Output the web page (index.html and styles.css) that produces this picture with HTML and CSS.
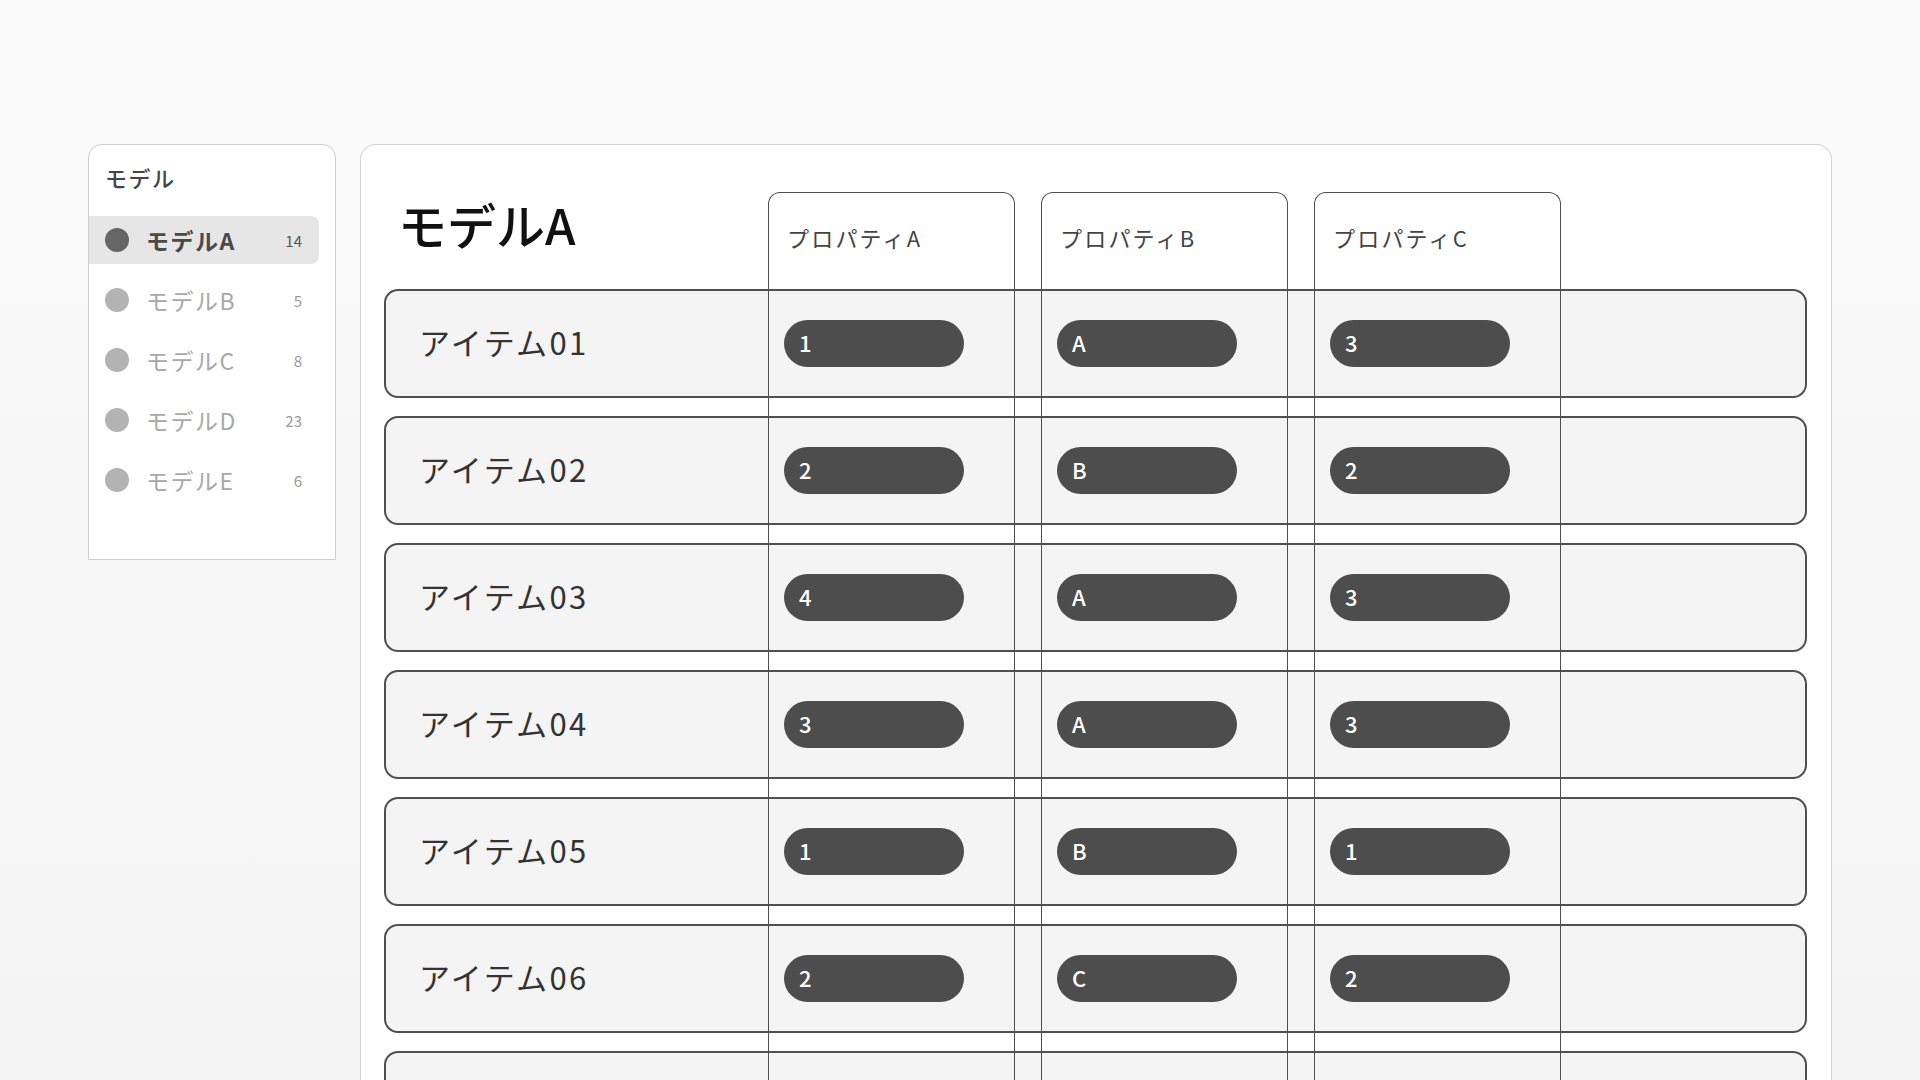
FILE: index.html
```html
<!DOCTYPE html>
<html lang="ja">
<head>
<meta charset="utf-8">
<title>モデルA</title>
<link rel="stylesheet" href="styles.css">
</head>
<body>
<div class="page">
  <aside class="sidebar">
    <div class="side-title">モデル</div>
    <ul class="models">
      <li class="model active"><span class="dot"></span><span class="m-name">モデルA</span><span class="m-count">14</span></li>
      <li class="model"><span class="dot"></span><span class="m-name">モデルB</span><span class="m-count">5</span></li>
      <li class="model"><span class="dot"></span><span class="m-name">モデルC</span><span class="m-count">8</span></li>
      <li class="model"><span class="dot"></span><span class="m-name">モデルD</span><span class="m-count">23</span></li>
      <li class="model"><span class="dot"></span><span class="m-name">モデルE</span><span class="m-count">6</span></li>
    </ul>
  </aside>
  <main class="panel">
    <div class="table">
      <div class="cols" aria-hidden="true">
        <div class="col-space"></div>
        <div class="col"></div>
        <div class="col"></div>
        <div class="col"></div>
      </div>
      <div class="head">
        <h1 class="title">モデルA</h1>
        <div class="th">プロパティA</div>
        <div class="th">プロパティB</div>
        <div class="th">プロパティC</div>
      </div>
      <div class="rows">
        <div class="row"><div class="name">アイテム01</div><div class="cell"><span class="pill">1</span></div><div class="cell"><span class="pill">A</span></div><div class="cell"><span class="pill">3</span></div></div>
        <div class="row"><div class="name">アイテム02</div><div class="cell"><span class="pill">2</span></div><div class="cell"><span class="pill">B</span></div><div class="cell"><span class="pill">2</span></div></div>
        <div class="row"><div class="name">アイテム03</div><div class="cell"><span class="pill">4</span></div><div class="cell"><span class="pill">A</span></div><div class="cell"><span class="pill">3</span></div></div>
        <div class="row"><div class="name">アイテム04</div><div class="cell"><span class="pill">3</span></div><div class="cell"><span class="pill">A</span></div><div class="cell"><span class="pill">3</span></div></div>
        <div class="row"><div class="name">アイテム05</div><div class="cell"><span class="pill">1</span></div><div class="cell"><span class="pill">B</span></div><div class="cell"><span class="pill">1</span></div></div>
        <div class="row"><div class="name">アイテム06</div><div class="cell"><span class="pill">2</span></div><div class="cell"><span class="pill">C</span></div><div class="cell"><span class="pill">2</span></div></div>
        <div class="row"><div class="cell"></div><div class="cell"></div><div class="cell"></div><div class="cell"></div></div>
      </div>
    </div>
  </main>
</div>
</body>
</html>
```

FILE: styles.css
```css
html, body {
  margin: 0;
  padding: 0;
  height: 100%;
  overflow: hidden;
}

body {
  background: linear-gradient(180deg, #fafafa 0%, #f4f4f4 100%);
  font-family: "Noto Sans CJK JP", "Noto Sans", sans-serif;
  color: #333;
}

.page {
  display: flex;
  align-items: flex-start;
  gap: 24px;
  padding: 144px 0 0 88px;
}

/* Sidebar */
.sidebar {
  box-sizing: border-box;
  width: 248px;
  height: 416px;
  background: #fff;
  border: 1px solid #cfcfcf;
  border-radius: 14px 14px 0 0;
  padding-top: 17px;
}

.side-title {
  font-size: 22px;
  line-height: 30px;
  letter-spacing: 1.5px;
  color: #444;
  font-weight: 500;
  padding-left: 16px;
}

.models {
  list-style: none;
  margin: 24px 0 0;
  padding: 0;
  display: flex;
  flex-direction: column;
  gap: 12px;
}

.model {
  display: flex;
  align-items: center;
  height: 48px;
  margin-right: 16px;
  padding: 0 17px 0 16px;
  border-radius: 0 8px 8px 0;
  color: #a8a8a8;
}

.model.active {
  background: #e6e6e6;
  color: #4a4a4a;
}

.dot {
  width: 24px;
  height: 24px;
  border-radius: 50%;
  background: #b3b3b3;
  flex: none;
}

.model.active .dot {
  background: #666;
}

.m-name {
  margin-left: 17px;
  font-size: 23px;
  letter-spacing: 1.5px;
  flex: 1;
}

.model.active .m-name {
  font-weight: 700;
}

.m-count {
  font-size: 15px;
  color: #999;
}

.model.active .m-count {
  color: #555;
}

/* Main panel */
.panel {
  box-sizing: border-box;
  width: 1472px;
  height: 936px;
  overflow: hidden;
  background: #fff;
  border: 1px solid #d4d4d4;
  border-bottom: none;
  border-radius: 16px 16px 0 0;
  padding: 47px 23px 0;
}

.table {
  position: relative;
}

.cols {
  position: absolute;
  top: 0;
  left: 0;
  right: 0;
  height: 1000px;
  display: grid;
  grid-template-columns: 358px 247px 247px 247px;
  column-gap: 26px;
  pointer-events: none;
  z-index: 2;
}

.col {
  box-sizing: border-box;
  border: 1.5px solid #4f4f4f;
  border-bottom: none;
  border-radius: 12px 12px 0 0;
}

.head {
  display: grid;
  grid-template-columns: 358px 247px 247px 247px;
  column-gap: 26px;
  height: 97px;
}

.title {
  margin: 8px 0 0 14px;
  font-size: 49px;
  line-height: 48px;
  font-weight: 500;
  color: #111;
  align-self: start;
}

.th {
  display: flex;
  align-items: center;
  padding: 0 0 8px 19px;
  font-size: 22px;
  letter-spacing: 2.2px;
  color: #444;
}

.rows {
  display: flex;
  flex-direction: column;
  gap: 18px;
}

.row {
  box-sizing: border-box;
  height: 109px;
  width: 1423px;
  border: 2px solid #505050;
  border-radius: 14px;
  background: #f4f4f4;
  display: grid;
  grid-template-columns: 356px 247px 247px 247px;
  column-gap: 26px;
  align-items: center;
}

.name {
  padding: 0 0 4px 33px;
  font-size: 31px;
  letter-spacing: 2.4px;
  color: #333;
}

.cell {
  padding-left: 16px;
}

.pill {
  display: flex;
  align-items: center;
  box-sizing: border-box;
  width: 180px;
  height: 47px;
  border-radius: 24px;
  background: #4d4d4d;
  color: #fff;
  font-size: 22px;
  font-weight: 500;
  padding: 0 0 3px 15px;
}
```
